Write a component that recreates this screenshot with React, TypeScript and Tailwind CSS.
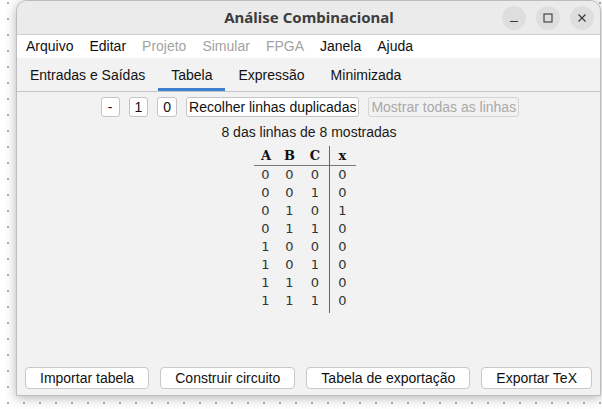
import React from 'react';

const menus: { label: string; enabled: boolean }[] = [
  { label: 'Arquivo', enabled: true },
  { label: 'Editar', enabled: true },
  { label: 'Projeto', enabled: false },
  { label: 'Simular', enabled: false },
  { label: 'FPGA', enabled: false },
  { label: 'Janela', enabled: true },
  { label: 'Ajuda', enabled: true },
];

const tabs = ['Entradas e Saídas', 'Tabela', 'Expressão', 'Minimizada'];

const rows: number[][] = [
  [0, 0, 0, 0],
  [0, 0, 1, 0],
  [0, 1, 0, 1],
  [0, 1, 1, 0],
  [1, 0, 0, 0],
  [1, 0, 1, 0],
  [1, 1, 0, 0],
  [1, 1, 1, 0],
];

const sans = "font-['Liberation_Sans',Arial,sans-serif]";

function SmallButton({ children, disabled }: { children: React.ReactNode; disabled?: boolean }) {
  return (
    <div
      className={
        disabled
          ? 'h-[20px] px-[2px] flex items-center border border-[#d4d4d4] rounded-[3px] bg-[#f2f2f2] text-[#a9a9a9]'
          : 'h-[20px] px-[2px] flex items-center border border-[#c4c4c4] rounded-[3px] bg-white text-[#111]'
      }
    >
      {children}
    </div>
  );
}

function WinButton({ children }: { children: React.ReactNode }) {
  return (
    <div className="w-[24px] h-[24px] rounded-full bg-[#dedede] flex items-center justify-center text-[#3a3a3a]">
      {children}
    </div>
  );
}

export default function App() {
  return (
    <div className="w-[602px] h-[409px] overflow-hidden bg-white bg-[radial-gradient(circle,#9a9a9a_0.6px,transparent_1.1px)] bg-[size:16px_16px] bg-[position:0px_-5px] pl-[16px]">
      <div className={`w-[585px] h-[396px] flex flex-col bg-[#f2f2f2] border border-[#bdbdbd] rounded-t-[11px] overflow-hidden shadow-[0_2px_12px_rgba(0,0,0,0.3)] ${sans} text-[14px]`}>
        {/* title bar */}
        <div className="h-[34px] shrink-0 grid grid-cols-[1fr_auto_1fr] items-center bg-[#ebebeb] border-b border-[#cfcfcf]">
          <div />
          <div className="font-['Noto_Sans',sans-serif] font-bold text-[15px] text-[#3d3d3d] pl-[1px]">
            Análise Combinacional
          </div>
          <div className="flex justify-end gap-[10px] pr-[6px]">
            <WinButton>
              <svg width="10" height="10" viewBox="0 0 10 10">
                <path d="M1 8.5h8" stroke="currentColor" strokeWidth="1.2" />
              </svg>
            </WinButton>
            <WinButton>
              <svg width="10" height="10" viewBox="0 0 10 10">
                <rect x="1" y="1" width="8" height="8" fill="none" stroke="currentColor" strokeWidth="1.1" />
              </svg>
            </WinButton>
            <WinButton>
              <svg width="10" height="10" viewBox="0 0 10 10">
                <path d="M1.5 1.5l7 7M8.5 1.5l-7 7" stroke="currentColor" strokeWidth="1.2" />
              </svg>
            </WinButton>
          </div>
        </div>

        {/* menu bar */}
        <div className="h-[23px] shrink-0 bg-white flex items-center pl-[1px]">
          {menus.map((m) => (
            <span key={m.label} className={m.enabled ? 'px-2 text-[#111]' : 'px-2 text-[#a3a3a3]'}>
              {m.label}
            </span>
          ))}
        </div>

        {/* tabs */}
        <div className="h-[34px] shrink-0 flex border-b border-[#c6c6c6]">
          {tabs.map((t) => (
            <div
              key={t}
              className={
                t === 'Tabela'
                  ? 'px-[13px] flex items-center pt-[4px] border-b-[3px] border-[#3d7fce] text-[#111]'
                  : 'px-[13px] flex items-center pt-[4px] border-b-[3px] border-transparent text-[#111]'
              }
            >
              {t}
            </div>
          ))}
        </div>

        {/* content */}
        <div className="flex-1 flex flex-col items-center pt-[5px]">
          <div className="flex gap-[9px] items-center ml-[3px]">
            <SmallButton><span className="px-[4px]">-</span></SmallButton>
            <SmallButton><span className="px-[3px]">1</span></SmallButton>
            <SmallButton><span className="px-[3px]">0</span></SmallButton>
            <SmallButton>Recolher linhas duplicadas</SmallButton>
            <SmallButton disabled>Mostrar todas as linhas</SmallButton>
          </div>
          <div className="mt-[7px] h-[16px] leading-[16px] text-[#1a1a1a] ml-[1px]">8 das linhas de 8 mostradas</div>

          <div className="mt-[6px] mr-[8px] flex leading-[18px]">
            <div className="flex flex-col border-r border-[#666]">
              <div className="h-[20px] grid grid-cols-[24px_24px_27px] items-center font-['DejaVu_Serif',serif] font-bold text-[13px] text-[#111] border-b border-[#777]">
                <span className="text-center pl-[1px]">A</span>
                <span className="text-center">B</span>
                <span className="text-center">C</span>
              </div>
              {rows.map((r, i) => (
                <div key={i} className="h-[18px] grid grid-cols-[24px_24px_27px] items-center font-['DejaVu_Sans',sans-serif] text-[13px] text-[#333]">
                  <span className="text-center">{r[0]}</span>
                  <span className="text-center">{r[1]}</span>
                  <span className="text-center">{r[2]}</span>
                </div>
              ))}
              <div className="h-[3px]" />
            </div>
            <div className="flex flex-col w-[26px]">
              <div className="h-[20px] grid grid-cols-[26px] items-center font-['DejaVu_Serif',serif] font-bold text-[13px] text-[#111] border-b border-[#777]">
                <span className="text-center">x</span>
              </div>
              {rows.map((r, i) => (
                <div key={i} className="h-[18px] grid grid-cols-[26px] items-center font-['DejaVu_Sans',sans-serif] text-[13px] text-[#333]">
                  <span className="text-center">{r[3]}</span>
                </div>
              ))}
            </div>
          </div>

          <div className="flex-1" />

          <div className="w-full flex justify-between px-[8px] pb-[6px]">
            {['Importar tabela', 'Construir circuito', 'Tabela de exportação', 'Exportar TeX'].map((b) => (
              <div key={b} className="h-[22px] px-[14px] flex items-center bg-white border border-[#c8c8c8] rounded-[4px] text-[#111]">
                {b}
              </div>
            ))}
          </div>
        </div>
      </div>
    </div>
  );
}
